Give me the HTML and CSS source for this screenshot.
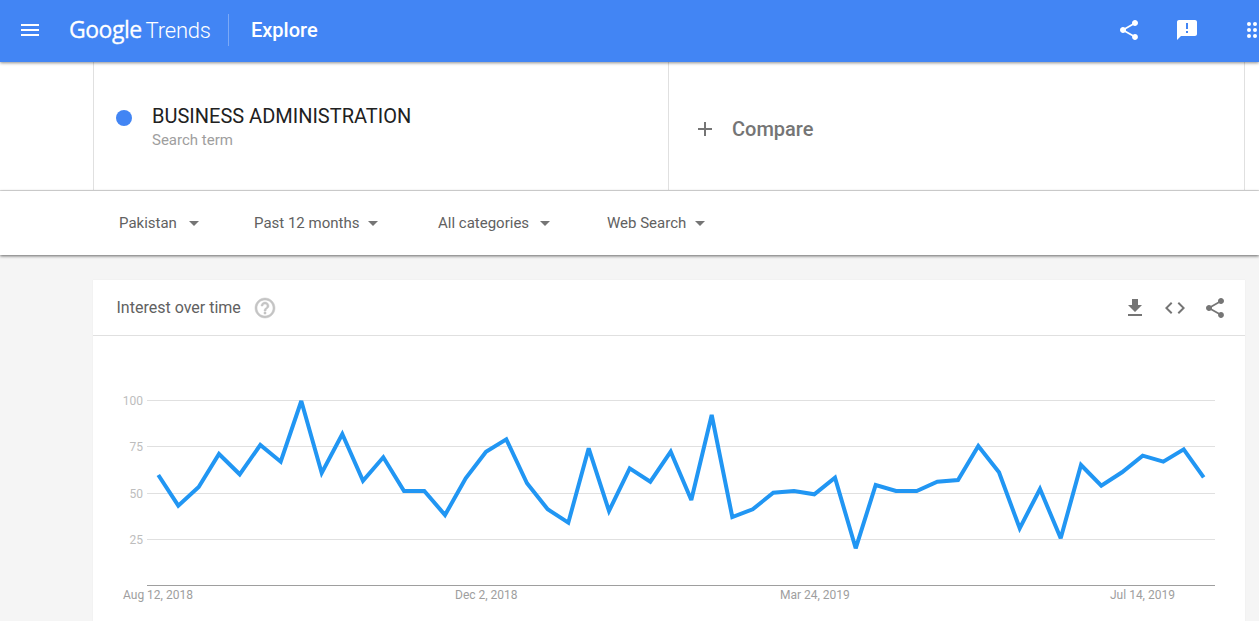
FILE: index.html
```html
<!DOCTYPE html>
<html lang="en">
<head>
    <meta charset="UTF-8">
    <meta name="viewport" content="width=device-width, initial-scale=1.0">
    <title>Explore - Google Trends</title>
    <link rel="stylesheet" href="styles.css">
</head>
<body>
    <header class="top-bar">
        <svg class="icon menu-icon" viewBox="0 0 24 24"><path d="M3 18h18v-2H3v2zm0-5h18v-2H3v2zm0-7v2h18V6H3z"/></svg>
        <div class="logo"><span class="logo-google">Google</span><span class="logo-trends">Trends</span></div>
        <div class="top-divider"></div>
        <div class="page-title">Explore</div>
        <div class="top-actions">
            <svg class="icon" viewBox="0 0 24 24"><path d="M18 16.08c-.76 0-1.44.3-1.96.77L8.91 12.7c.05-.23.09-.46.09-.7s-.04-.47-.09-.7l7.05-4.11c.54.5 1.25.81 2.04.81 1.66 0 3-1.34 3-3s-1.34-3-3-3-3 1.34-3 3c0 .24.04.47.09.7L8.04 9.81C7.5 9.31 6.79 9 6 9c-1.66 0-3 1.34-3 3s1.34 3 3 3c.79 0 1.5-.31 2.04-.81l7.12 4.16c-.05.21-.08.43-.08.65 0 1.61 1.31 2.92 2.92 2.92 1.61 0 2.92-1.31 2.92-2.92s-1.31-2.92-2.92-2.92z"/></svg>
            <svg class="icon" viewBox="0 0 24 24"><path d="M20 2H4c-1.1 0-1.99.9-1.99 2L2 22l4-4h14c1.1 0 2-.9 2-2V4c0-1.1-.9-2-2-2zm-7 9h-2V5h2v6zm0 4h-2v-2h2v2z"/></svg>
            <svg class="icon apps-icon" viewBox="0 0 24 24">
                <circle cx="6" cy="6" r="2"/><circle cx="12" cy="6" r="2"/><circle cx="18" cy="6" r="2"/>
                <circle cx="6" cy="12" r="2"/><circle cx="12" cy="12" r="2"/><circle cx="18" cy="12" r="2"/>
                <circle cx="6" cy="18" r="2"/><circle cx="12" cy="18" r="2"/><circle cx="18" cy="18" r="2"/>
            </svg>
        </div>
    </header>

    <section class="search-row">
        <div class="term-cell">
            <span class="term-dot"></span>
            <div>
                <div class="term-name">BUSINESS ADMINISTRATION</div>
                <div class="term-type">Search term</div>
            </div>
        </div>
        <div class="compare-cell">
            <svg class="icon plus-icon" viewBox="0 0 24 24"><path d="M19 13h-6v6h-2v-6H5v-2h6V5h2v6h6v2z"/></svg>
            <span class="compare-label">Compare</span>
        </div>
    </section>

    <nav class="filter-row">
        <div class="filter filter-geo">Pakistan<span class="caret"></span></div>
        <div class="filter filter-time">Past 12 months<span class="caret"></span></div>
        <div class="filter filter-cat">All categories<span class="caret"></span></div>
        <div class="filter">Web Search<span class="caret"></span></div>
    </nav>

    <main class="content">
        <section class="card">
            <div class="card-header">
                <h2 class="card-title">Interest over time</h2>
                <svg class="icon help-icon" viewBox="0 0 24 24"><path d="M11 18h2v-2h-2v2zm1-16C6.48 2 2 6.48 2 12s4.48 10 10 10 10-4.48 10-10S17.52 2 12 2zm0 18c-4.41 0-8-3.59-8-8s3.59-8 8-8 8 3.59 8 8-3.59 8-8 8zm0-14c-2.21 0-4 1.79-4 4h2c0-1.1.9-2 2-2s2 .9 2 2c0 2-3 1.75-3 5h2c0-2.25 3-2.5 3-5 0-2.21-1.79-4-4-4z"/></svg>
                <div class="card-actions">
                    <svg class="icon" viewBox="0 0 24 24"><path d="M19 9h-4V3H9v6H5l7 7 7-7zM5 18v2h14v-2H5z"/></svg>
                    <svg class="icon" viewBox="0 0 24 24"><path d="M9.4 16.6L4.8 12l4.6-4.6L8 6l-6 6 6 6 1.4-1.4zm5.2 0l4.6-4.6-4.6-4.6L16 6l6 6-6 6-1.4-1.4z"/></svg>
                    <svg class="icon" viewBox="0 0 24 24"><path d="M18 16.08c-.76 0-1.44.3-1.96.77L8.91 12.7c.05-.23.09-.46.09-.7s-.04-.47-.09-.7l7.05-4.11c.54.5 1.25.81 2.04.81 1.66 0 3-1.34 3-3s-1.34-3-3-3-3 1.34-3 3c0 .24.04.47.09.7L8.04 9.81C7.5 9.31 6.79 9 6 9c-1.66 0-3 1.34-3 3s1.34 3 3 3c.79 0 1.5-.31 2.04-.81l7.12 4.16c-.05.21-.08.43-.08.65 0 1.61 1.31 2.92 2.92 2.92 1.61 0 2.92-1.31 2.92-2.92s-1.31-2.92-2.92-2.92z"/></svg>
                </div>
            </div>

            <!-- viewBox uses page coordinates so the points read straight off the screenshot -->
            <svg class="chart" viewBox="93 336 1152 285">
                <g class="grid">
                    <line x1="147" y1="400.5" x2="1215" y2="400.5"/>
                    <line x1="147" y1="446.5" x2="1215" y2="446.5"/>
                    <line x1="147" y1="493.5" x2="1215" y2="493.5"/>
                    <line x1="147" y1="539.5" x2="1215" y2="539.5"/>
                </g>
                <line class="baseline" x1="147" y1="585.5" x2="1215" y2="585.5"/>
                <g class="y-labels">
                    <text x="143" y="405">100</text>
                    <text x="143" y="451">75</text>
                    <text x="143" y="498">50</text>
                    <text x="143" y="544">25</text>
                </g>
                <g class="x-labels">
                    <text x="123" y="599">Aug 12, 2018</text>
                    <text x="455" y="599">Dec 2, 2018</text>
                    <text x="780" y="599">Mar 24, 2019</text>
                    <text x="1110" y="599">Jul 14, 2019</text>
                </g>
                <polyline class="trend-line" points="158.3,475 178.3,505.7 198.7,487 219,454 239.7,474.3 260.3,445 280.7,461.7 301.3,401 321.7,473 342.3,434 363,480.7 383.3,457.3 404,491 424.3,491 445,515 465.7,478.3 486,451.7 506.3,439.3 527,483.3 547.7,509.3 568.3,522.7 588.7,448.3 609,511 629.7,468.3 650.3,481.7 670.7,451.7 691.3,500 711.7,415 732.3,517 752.7,509.3 773.3,492.7 794,491 814.3,494.3 835,477.7 855.7,548.3 875.7,485 896,491 916.7,491 937.3,481.7 958,480 978.3,446 999,472.3 1019.7,528.3 1040,489 1060.7,538.3 1081,465 1101.3,485.7 1122,472.3 1142.7,455.7 1163.3,461.7 1183.7,449.3 1203.7,477.3"/>
            </svg>
        </section>
    </main>
</body>
</html>
```

FILE: styles.css
```css
* {
    margin: 0;
    padding: 0;
    box-sizing: border-box;
}

html, body {
    height: 621px;
    overflow: hidden;
}

body {
    font-family: 'Roboto', 'Liberation Sans', sans-serif;
    background: #f5f5f5;
    color: #424242;
}

.icon {
    display: block;
    width: 24px;
    height: 24px;
    flex-shrink: 0;
    fill: currentColor;
}

/* Top bar */
.top-bar {
    position: relative;
    z-index: 3;
    display: flex;
    align-items: center;
    height: 62px;
    padding: 0 0 2px 18px;
    background: #4285f4;
    color: white;
    box-shadow: 0 1px 3px rgba(0, 0, 0, 0.45);
}

.logo {
    display: flex;
    align-items: baseline;
    gap: 4px;
    width: 159px;
    margin: -2px 0 0 27px;
    white-space: nowrap;
}

.logo-google {
    font-family: 'Open Sans', sans-serif;
    font-size: 23px;
    letter-spacing: -0.5px;
    -webkit-text-stroke: 0.3px white;
}

.logo-trends {
    font-size: 22px;
    font-weight: 300;
    letter-spacing: -0.2px;
}

.top-divider {
    width: 1px;
    height: 32px;
    background: rgba(255, 255, 255, 0.3);
}

.page-title {
    margin-left: 22px;
    font-size: 20px;
    font-weight: 500;
}

.top-actions {
    display: flex;
    margin-left: auto;
    margin-right: -8px;
}

.top-actions .icon {
    margin-left: 34px;
}

.top-actions .apps-icon {
    margin-left: 44px;
}

/* Search term row */
.search-row {
    display: flex;
    height: 129px;
    padding-left: 93px;
    background: white;
    border-bottom: 1px solid #e0e0e0;
}

.term-cell, .compare-cell {
    display: flex;
    align-items: center;
    border-left: 1px solid #e0e0e0;
}

.term-cell {
    width: 575px;
    padding: 2px 0 0 22px;
}

.compare-cell {
    width: 577px;
    padding: 6px 0 0 24px;
    border-right: 1px solid #e0e0e0;
}

.term-dot {
    width: 16px;
    height: 16px;
    margin: -18px 20px 0 0;
    border-radius: 50%;
    background: #4285f4;
}

.term-name {
    font-size: 20px;
    line-height: 26px;
    color: #212121;
}

.term-type {
    font-size: 15px;
    line-height: 22px;
    color: #9e9e9e;
}

.plus-icon {
    color: #757575;
}

.compare-label {
    margin-left: 15px;
    font-size: 20px;
    font-weight: 500;
    color: #757575;
}

/* Filters */
.filter-row {
    position: relative;
    z-index: 2;
    display: flex;
    align-items: center;
    height: 64px;
    padding-left: 119px;
    background: white;
    box-shadow: 0 1px 3px rgba(0, 0, 0, 0.6);
}

.filter {
    display: flex;
    align-items: center;
    font-size: 15px;
    color: #616161;
}

.filter-geo { width: 135px; }
.filter-time { width: 184px; }
.filter-cat { width: 169px; }

.caret {
    width: 0;
    height: 0;
    margin-left: 9px;
    border-left: 5.5px solid transparent;
    border-right: 5.5px solid transparent;
    border-top: 5.5px solid #757575;
}

.filter-geo .caret { margin-left: 12px; }
.filter-cat .caret { margin-left: 11px; }

/* Card */
.content {
    padding: 25px 14px 0 93px;
}

.card {
    background: white;
    box-shadow: 0 0 1px rgba(0, 0, 0, 0.08);
}

.card-header {
    display: flex;
    align-items: center;
    height: 56px;
    padding: 0 18px 0 23.5px;
    border-bottom: 1px solid #e0e0e0;
}

.card-title {
    font-size: 16px;
    font-weight: 400;
    color: #616161;
}

.help-icon {
    margin-left: 12px;
    color: #c4c4c4;
    stroke: currentColor;
    stroke-width: 0.5;
}

.card-actions {
    display: flex;
    gap: 16px;
    margin-left: auto;
    color: #757575;
}

/* Chart */
.chart {
    display: block;
    width: 1152px;
    height: 285px;
}

.grid line {
    stroke: #e0e0e0;
    stroke-width: 1;
}

.baseline {
    stroke: #9e9e9e;
    stroke-width: 1;
}

.y-labels text {
    font-size: 12px;
    fill: #bdbdbd;
    text-anchor: end;
}

.x-labels text {
    font-size: 12px;
    fill: #9e9e9e;
}

.trend-line {
    fill: none;
    stroke: #2196f3;
    stroke-width: 4;
    stroke-linejoin: miter;
    stroke-miterlimit: 3;
}
```
